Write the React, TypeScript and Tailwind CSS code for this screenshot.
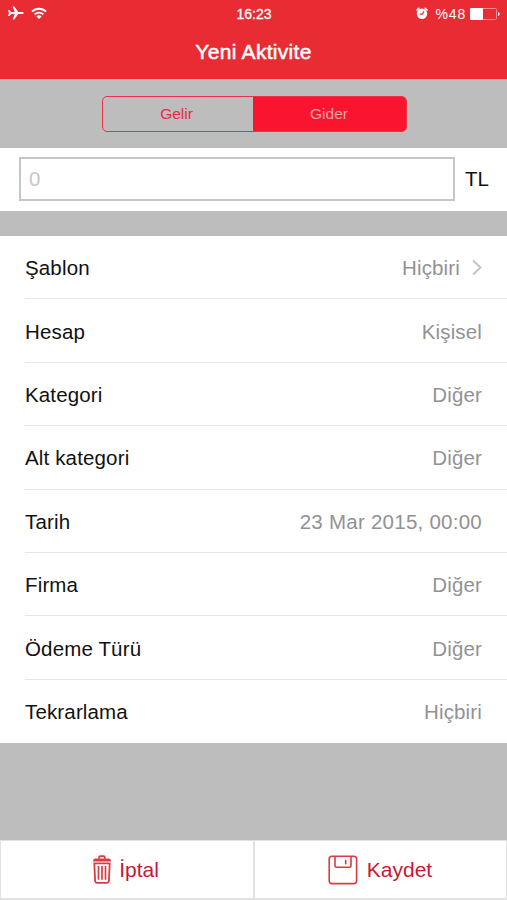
import React from "react";

const rows = [
  { label: "Şablon", value: "Hiçbiri", arrow: true },
  { label: "Hesap", value: "Kişisel" },
  { label: "Kategori", value: "Diğer" },
  { label: "Alt kategori", value: "Diğer" },
  { label: "Tarih", value: "23 Mar 2015, 00:00", wide: true },
  { label: "Firma", value: "Diğer" },
  { label: "Ödeme Türü", value: "Diğer" },
  { label: "Tekrarlama", value: "Hiçbiri" },
];

function StatusBar() {
  return (
    <div className="grid grid-cols-3 items-center h-[27px] pl-2 pr-[7px] text-white">
      <div className="flex items-center gap-[7px] -mt-0.5">
        <svg width="16" height="14" viewBox="0 0 16 14" fill="currentColor">
          <path d="M15.7 7c0 .6-.7 1-1.5 1h-4L6.3 13.5H4.7l2-5.500H3.200L1.400 10H.1L.9 7 .1 4h1.300L3.200 6h3.500l-2-5.500h1.600L10.200 6h4c.8 0 1.500.4 1.500 1z" />
        </svg>
        <svg
          width="16"
          height="12"
          viewBox="0 0 16 12"
          fill="none"
          stroke="currentColor"
          strokeWidth="1.8"
        >
          <path d="M1 4.600a10 10 0 0 1 14 0" />
          <path d="M3.600 7.500a6.300 6.300 0 0 1 8.800 0" />
          <path d="M8 12L5.400 9.500a3.500 3.500 0 0 1 5.200 0z" fill="currentColor" stroke="none" />
        </svg>
      </div>
      <span className="text-center text-[14px] leading-none [-webkit-text-stroke:0.3px_currentColor]">
        16:23
      </span>
      <div className="flex items-center justify-end">
        <svg width="12" height="13" viewBox="0 0 12 13" fill="none" className="mr-2 -mt-px">
          <circle cx="6" cy="6.700" r="5.200" fill="white" />
          <path
            d="M.9 3L2.800 1.300M11.100 3L9.200 1.300"
            stroke="white"
            strokeWidth="1.6"
            strokeLinecap="round"
          />
          <path d="M3.600 7.200h2.800l1.600-3" stroke="#e92b33" strokeWidth="1.2" />
        </svg>
        <span className="text-[14px] leading-none tracking-[0.8px] mr-1">%48</span>
        <svg width="30" height="12" viewBox="0 0 30 12" fill="none">
          <rect x=".5" y=".5" width="26" height="11" rx="1" stroke="#f98a8f" />
          <rect x="0" y="0" width="13" height="12" rx="1" fill="white" />
          <path d="M28 4v4c1-.3 1.600-1 1.600-2S29 4.300 28 4z" fill="white" />
        </svg>
      </div>
    </div>
  );
}

function TrashIcon() {
  return (
    <svg
      width="18"
      height="29"
      viewBox="0 0 18 29"
      fill="none"
      stroke="#dc3b41"
      strokeWidth="1.8"
    >
      <path d="M6.200 3.700V2.200c0-.6.4-1 1-1h3.600c.6 0 1 .4 1 1v1.500" />
      <path d="M1 5.600c0-.9.6-1.300 1.500-1.300h13c.9 0 1.500.4 1.500 1.300z" />
      <path d="M1.300 8.300h15.400l-.8 17.500c-.1 1.300-.8 2-2 2H4.100c-1.200 0-1.900-.7-2-2z" />
      <path d="M5.500 11v13.800M9 11v13.800M12.500 11v13.800" strokeWidth="1.7" />
    </svg>
  );
}

function SaveIcon() {
  return (
    <svg
      width="30"
      height="30"
      viewBox="0 0 30 30"
      fill="none"
      stroke="#dc3b41"
      strokeWidth="1.6"
    >
      <rect x="1.200" y="1.200" width="27.400" height="27.400" rx="2.800" />
      <path d="M7 1.500v9.200c0 1 .6 1.600 1.600 1.600h12.800c1 0 1.600-.6 1.600-1.600V1.500" />
      <path d="M17.700 4.800v4.600" />
    </svg>
  );
}

export function NewActivityPage() {
  return (
    <div className="flex flex-col h-[900px] w-[507px] bg-[#bdbdbd] overflow-hidden font-['Liberation_Sans',Arial,sans-serif]">
      <header className="h-[79px] bg-[#e92b33]">
        <StatusBar />
        <h1 className="mt-[13px] text-center text-[21px] leading-6 tracking-[0.3px] text-white [-webkit-text-stroke:0.5px_currentColor]">
          Yeni Aktivite
        </h1>
      </header>

      <div className="flex justify-center h-[69px] pt-[17px] pl-px">
        <div className="flex w-[305px] h-9 rounded-[5px] border border-[#ea3348] overflow-hidden text-[15.5px]">
          <button className="w-[150px] pr-0.5 text-[#e52c43]">Gelir</button>
          <button className="flex-1 bg-[#f9152f] text-[#f5a3a8]">Gider</button>
        </div>
      </div>

      <div className="flex items-center h-[63px] bg-white pl-[19px]">
        <input
          placeholder="0"
          className="w-[436px] h-[44px] mb-px border-2 border-[#c6c6c6] px-2 text-[20.5px] outline-none placeholder:text-[#c8c8c8]"
        />
        <span className="ml-[10px] text-[20.5px] text-[#111]">TL</span>
      </div>

      <ul className="flex flex-col mt-[25px] h-[507px] bg-white text-[20.5px]">
        {rows.map((row, i) => (
          <li key={row.label} className="flex flex-1 pl-[25px]">
            <div
              className={
                "flex flex-1 items-center justify-between pr-[25px] pt-[3px]" +
                (i < rows.length - 1 ? " border-b border-[#e6e6e6]" : "")
              }
            >
              <span className="tracking-[0.15px] text-[#111]">{row.label}</span>
              <span className="flex items-center text-[#929294]">
                <span className={row.wide ? "tracking-[0.25px]" : "tracking-[0.15px]"}>
                  {row.value}
                </span>
                {row.arrow && (
                  <svg
                    width="11"
                    height="17"
                    viewBox="0 0 11 17"
                    fill="none"
                    stroke="#c2c2c5"
                    strokeWidth="1.8"
                    className="ml-[11px] -mt-[3px]"
                  >
                    <path d="M2 1.500l7.500 7L2 15.500" />
                  </svg>
                )}
              </span>
            </div>
          </li>
        ))}
      </ul>

      <footer className="flex mt-auto h-[60px] border-t border-x border-b-2 border-[#e2e2e2] bg-white text-[21px] text-[#cb1533]">
        <button className="flex items-center justify-center w-[254px] gap-2 pr-0.5 border-r-2 border-[#e2e2e2]">
          <TrashIcon />
          İptal
        </button>
        <button className="flex flex-1 items-center justify-center gap-[9px] pr-px">
          <SaveIcon />
          Kaydet
        </button>
      </footer>
    </div>
  );
}

export default NewActivityPage;
